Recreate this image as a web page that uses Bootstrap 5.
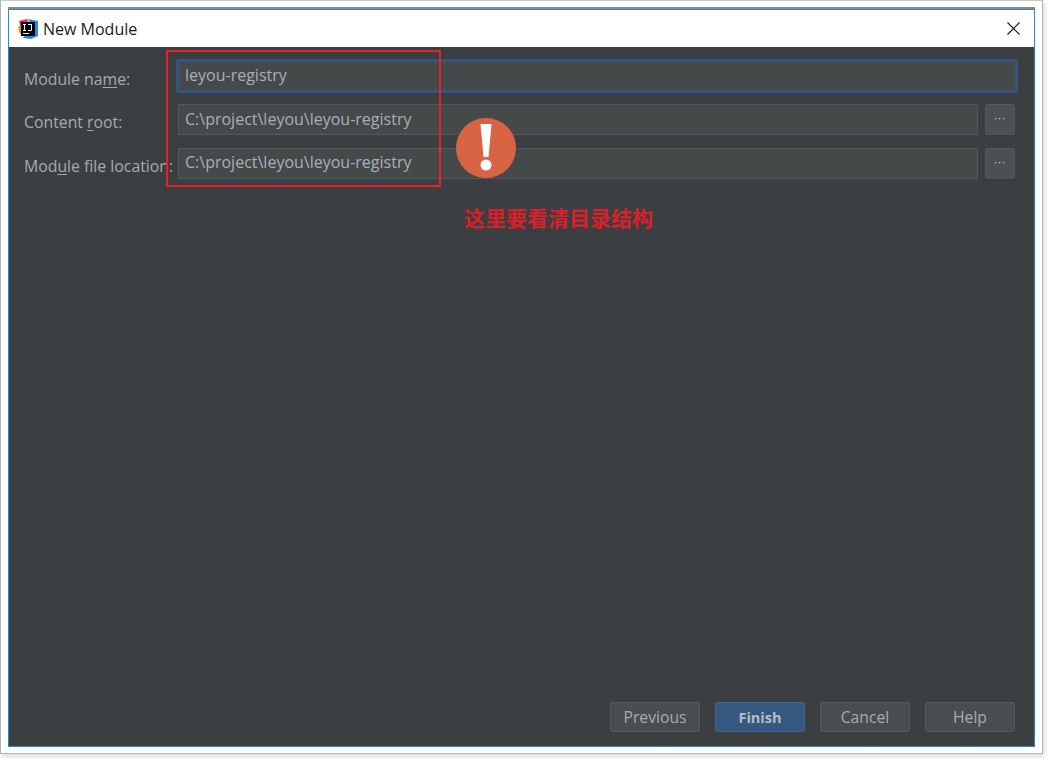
<!DOCTYPE html>
<html lang="en">
<head>
<meta charset="utf-8">
<title>New Module</title>
<link href="https://cdn.jsdelivr.net/npm/bootstrap@5.3.0/dist/css/bootstrap.min.css" rel="stylesheet">
<style>
html,body{height:759px;overflow:hidden;background:#fff;}
body{font-family:"Open Sans","Noto Sans",sans-serif;font-size:16px;color:#a9b0b5;}
.shot-frame{width:1043px;height:754px;border:1px solid #b4b4b4;border-top-color:#c8c8c8;background:#fff;padding:6px 7px 6px 7px;box-shadow:2px 3px 5px rgba(0,0,0,.14);}
.win{height:100%;width:1027px;border-top:2px solid #8a8a8a;position:relative;}
.win-in{height:100%;border:1px solid #2b86d6;background:#3c3f41;}
.title-bar{height:37px;background:#fff;color:#1a1a1a;padding:0 14px 0 9px;}
.title-text{font-size:16px;margin-left:5px;}
.form-area{padding:12px 19px 0 15px;}
.f-row{height:44px;}
.f-row.first{height:45px;}
.f-label{width:154px;flex:none;color:#a4abaf;font-size:15.8px;padding-top:7px;white-space:nowrap;}
.first .f-label{padding-top:9px;}
.f-label u{text-underline-offset:2px;}
.f-input{background:#45494a;border:1px solid #545859;color:#a9b0b5;height:31px;padding:0 6px;line-height:28px;font-size:16px;flex:1;}
.f-input.lower{line-height:26px;}
.f-input.on{border:3px solid #35547c;border-radius:2px;height:34px;margin:0 -3px 0 -2px;padding-left:6px;line-height:26px;}
.dots{width:30px;height:31px;flex:none;background:#4c5052;border:1px solid #54585a;border-radius:2px;color:#c8c8c8;font-size:11px;letter-spacing:1px;line-height:26px;text-align:center;margin-left:7px;box-shadow:0 1px 1px #35383a;padding:0;}
.foot-bar{padding:0 19px 14px 0;gap:15px;}
.act{width:90px;height:30px;background:#4a4d4f;border:1px solid #565a5c;border-radius:2px;color:#a5acb0;font-size:15.7px;line-height:29px;text-align:center;padding:0;}
.act.main{background:#365880;border-color:#3f6690;color:#b4bdc6;font-weight:700;font-size:14.5px;}
.mark-box{position:absolute;left:158px;top:41px;width:275px;height:137px;border:2px solid #e8202a;pointer-events:none;}
.mark-warn{position:absolute;left:448px;top:109px;}
.mark-note{position:absolute;left:456px;top:195px;color:#d9202a;font-family:"Noto Sans CJK SC",sans-serif;font-weight:700;font-size:21px;line-height:26px;white-space:nowrap;}
</style>
</head>
<body>
<div class="shot-frame">
  <div class="win">
    <div class="win-in d-flex flex-column">
      <div class="title-bar d-flex align-items-center flex-none">
        <svg width="20" height="20" viewBox="0 0 20 20" aria-hidden="true">
          <path d="M1 2 L9 0 L11 4 L3 11Z" fill="#f0286e"/>
          <path d="M0 8 L4 6 L6 15 L2 15Z" fill="#f58a1f"/>
          <path d="M10 0 L20 2 L20 17 L13 20 L5 19 L14 8Z" fill="#1f8ceb"/>
          <rect x="3" y="3" width="14" height="14" fill="#000"/>
          <rect x="5" y="14" width="6" height="1" fill="#fff"/>
          <path d="M5 5h3v1h-1v5h1v1H5v-1h1V6H5zM10 5h4v5.500q0 1.500-1.500 1.500h-2.500v-1h2.500q.5 0 .5-.5V6h-3z" fill="#fff"/>
        </svg>
        <span class="title-text">New Module</span>
        <svg class="ms-auto" width="13" height="13" viewBox="0 0 13 13" aria-hidden="true"><path d="M.5.5l12 12M12.500.5l-12 12" stroke="#111" stroke-width="1.100" fill="none"/></svg>
      </div>
      <div class="form-area flex-grow-1">
        <div class="f-row first d-flex">
          <div class="f-label">Module na<u>m</u>e:</div>
          <div class="f-input on">leyou-registry</div>
        </div>
        <div class="f-row d-flex">
          <div class="f-label">Content <u>r</u>oot:</div>
          <div class="f-input">C:\project\leyou\leyou-registry</div>
          <div class="dots">···</div>
        </div>
        <div class="f-row d-flex">
          <div class="f-label">Mod<u>u</u>le file location:</div>
          <div class="f-input lower">C:\project\leyou\leyou-registry</div>
          <div class="dots">···</div>
        </div>
      </div>
      <div class="foot-bar d-flex justify-content-end">
        <div class="act">Previous</div>
        <div class="act main">Finish</div>
        <div class="act">Cancel</div>
        <div class="act">Help</div>
      </div>
    </div>
    <div class="mark-box"></div>
    <svg class="mark-warn" width="60" height="60" viewBox="0 0 60 60" aria-hidden="true">
      <circle cx="30" cy="30" r="30" fill="#d96444"/>
      <path d="M24.500 6 H35.500 L32.500 39 H27.500Z" fill="#fff"/>
      <circle cx="30" cy="47" r="5.500" fill="#fff"/>
    </svg>
    <div class="mark-note">这里要看清目录结构</div>
  </div>
</div>
</body>
</html>
